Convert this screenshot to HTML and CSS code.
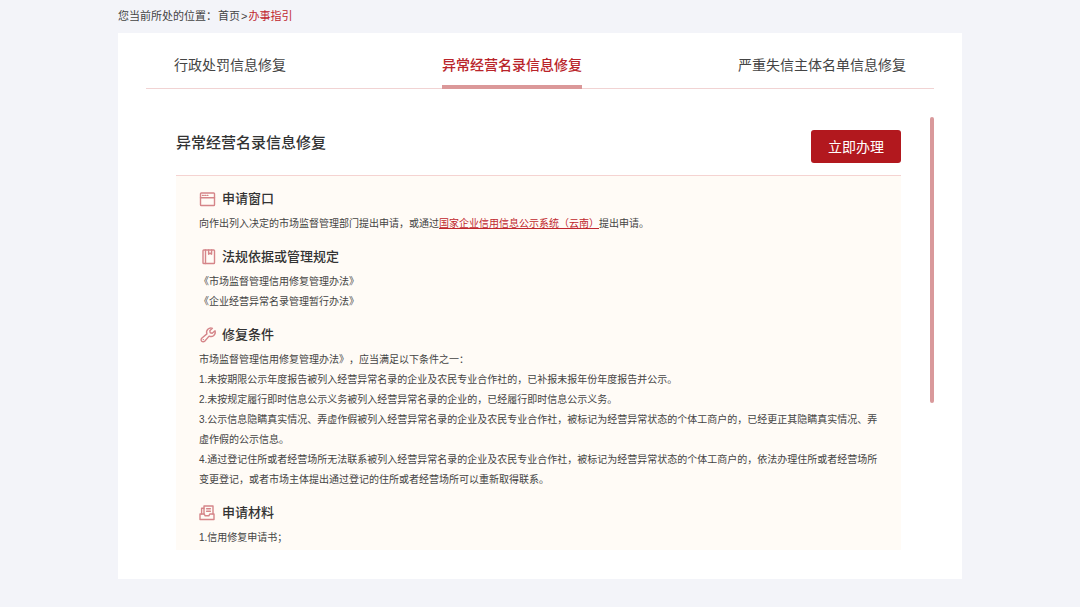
FILE: index.html
```html
<!DOCTYPE html>
<html lang="zh-CN">
<head>
<meta charset="utf-8">
<meta name="viewport" content="width=device-width, initial-scale=1">
<title>办事指引</title>
<link rel="stylesheet" href="styles.css">
</head>
<body>
<div class="page">
  <nav class="breadcrumb" aria-label="当前位置">
    <span class="breadcrumb-label">您当前所处的位置：</span>
    <a href="#">首页</a>
    <span>&gt;</span>
    <a class="current" href="#">办事指引</a>
  </nav>
  <main class="card">
    <div class="tabs" role="tablist">
      <button class="tab" type="button" role="tab" aria-selected="false">行政处罚信息修复</button>
      <button class="tab active" type="button" role="tab" aria-selected="true">异常经营名录信息修复</button>
      <button class="tab" type="button" role="tab" aria-selected="false">严重失信主体名单信息修复</button>
    </div>
    <div class="pane">
      <article class="guide">
        <header class="guide-head">
          <h1 class="guide-title">异常经营名录信息修复</h1>
          <button class="apply" type="button">立即办理</button>
        </header>
        <div class="guide-body">
          <section class="block">
            <h2 class="block-title">
              <svg class="icon" viewBox="0 0 16 16" aria-hidden="true"><rect x="1.5" y="2" width="14" height="12.5" rx="0.8"/><path d="M1.5 6.7h14"/><path d="M3.5 4.4h.8M5.8 4.4h.8M8.1 4.4h.8"/></svg>
              申请窗口
            </h2>
            <p>向作出列入决定的市场监督管理部门提出申请，或通过<a class="link" href="#">国家企业信用信息公示系统（云南）</a>提出申请。</p>
          </section>
          <section class="block">
            <h2 class="block-title">
              <svg class="icon" viewBox="0 0 16 16" aria-hidden="true"><rect x="4" y="1" width="11.5" height="13.5" rx="0.8"/><path d="M6.5 1v13.5"/><path d="M9.6 1v4.2l1.5-1.1 1.5 1.1V1"/></svg>
              法规依据或管理规定
            </h2>
            <p>《市场监督管理信用修复管理办法》</p>
            <p>《企业经营异常名录管理暂行办法》</p>
          </section>
          <section class="block">
            <h2 class="block-title">
              <svg class="icon" viewBox="0 0 16 16" aria-hidden="true"><path d="M13.4 1.3a4.3 4.3 0 0 0-5.5 5.6L2.7 11.2a2.1 2.1 0 1 0 3 3l4.4-5.1A4.3 4.3 0 0 0 16 3.8l-2.8 2.4-2-.5-.4-2z"/><path d="M4.3 12.6h.1"/></svg>
              修复条件
            </h2>
            <p>市场监督管理信用修复管理办法》，应当满足以下条件之一：</p>
            <p>1.未按期限公示年度报告被列入经营异常名录的企业及农民专业合作社的，已补报未报年份年度报告并公示。</p>
            <p>2.未按规定履行即时信息公示义务被列入经营异常名录的企业的，已经履行即时信息公示义务。</p>
            <p>3.公示信息隐瞒真实情况、弄虚作假被列入经营异常名录的企业及农民专业合作社，被标记为经营异常状态的个体工商户的，已经更正其隐瞒真实情况、弄虚作假的公示信息。</p>
            <p>4.通过登记住所或者经营场所无法联系被列入经营异常名录的企业及农民专业合作社，被标记为经营异常状态的个体工商户的，依法办理住所或者经营场所变更登记，或者市场主体提出通过登记的住所或者经营场所可以重新取得联系。</p>
          </section>
          <section class="block">
            <h2 class="block-title">
              <svg class="icon" viewBox="0 0 16 16" aria-hidden="true"><path d="M5 9V1h9v8"/><path d="M5 3.2H2.6V9"/><path d="M7.6 3.8h3.8M7.6 6.3h3.8"/><path d="M1 9h4.2l1 1.8h3.6l1-1.8H15v5.5H1z"/></svg>
              申请材料
            </h2>
            <p>1.信用修复申请书；</p>
          </section>
        </div>
      </article>
      <div class="scroll-track"><div class="scroll-thumb"></div></div>
    </div>
  </main>
</div>
</body>
</html>
```
FILE: styles.css
```css
* {
  box-sizing: border-box;
}

body {
  margin: 0;
  background: #f3f4f9;
  color: #444;
  font-family: "Liberation Sans", "Noto Sans CJK SC", sans-serif;
  font-size: 10px;
  line-height: 20px;
  text-spacing-trim: space-all;
}

h1,
h2,
p {
  margin: 0;
}

button {
  margin: 0;
  border: 0;
  font-family: inherit;
  cursor: pointer;
}

a {
  color: inherit;
  text-decoration: none;
}

.page {
  max-width: 844px;
  margin: 0 auto;
  padding-bottom: 28px;
}

.breadcrumb {
  display: flex;
  gap: 1px;
  padding: 6px 0 7px;
  font-size: 11px;
}

.breadcrumb .current {
  color: #c0272d;
}

.card {
  padding: 0 28px 29px;
  background: #fff;
}

.tabs {
  display: flex;
  justify-content: space-between;
  padding: 0 28px;
  border-bottom: 1px solid #f1d3d3;
}

.tab {
  margin-bottom: -1px;
  padding: 20px 0 8px;
  border-bottom: 4px solid transparent;
  background: none;
  color: #444;
  font-size: 14px;
  line-height: 24px;
}

.tab.active {
  border-bottom-color: #db9899;
  color: #b9242a;
  font-weight: 500;
}

.pane {
  display: flex;
  gap: 29px;
  padding-top: 28px;
}

.guide {
  flex: 1;
  padding-left: 30px;
}

.guide-head {
  display: flex;
  align-items: flex-start;
  justify-content: space-between;
  padding: 13px 0 12px;
}

.guide-title {
  color: #333;
  font-size: 15px;
  font-weight: 500;
  line-height: 25px;
}

.apply {
  width: 90px;
  height: 33px;
  padding: 0 0 2px;
  border-radius: 3px;
  background: #b2181e;
  color: #fff;
  font-size: 14px;
}

.guide-body {
  display: flex;
  flex-direction: column;
  gap: 8px;
  padding: 8px 20px 2px 23px;
  border-top: 1px solid #f5d3d1;
  background: #fffbf6;
}

.block-title {
  display: flex;
  align-items: center;
  gap: 7px;
  color: #333;
  font-size: 13px;
  font-weight: 500;
  line-height: 30px;
}

.icon {
  width: 16px;
  height: 16px;
  overflow: visible;
  fill: none;
  stroke: #d58589;
  stroke-width: 1.4;
  stroke-linecap: round;
  stroke-linejoin: round;
}

.link {
  color: #c0272d;
  text-decoration: underline;
}

.scroll-track {
  width: 4px;
}

.scroll-thumb {
  height: 66%;
  border-radius: 2px;
  background: #d9999b;
}
```
